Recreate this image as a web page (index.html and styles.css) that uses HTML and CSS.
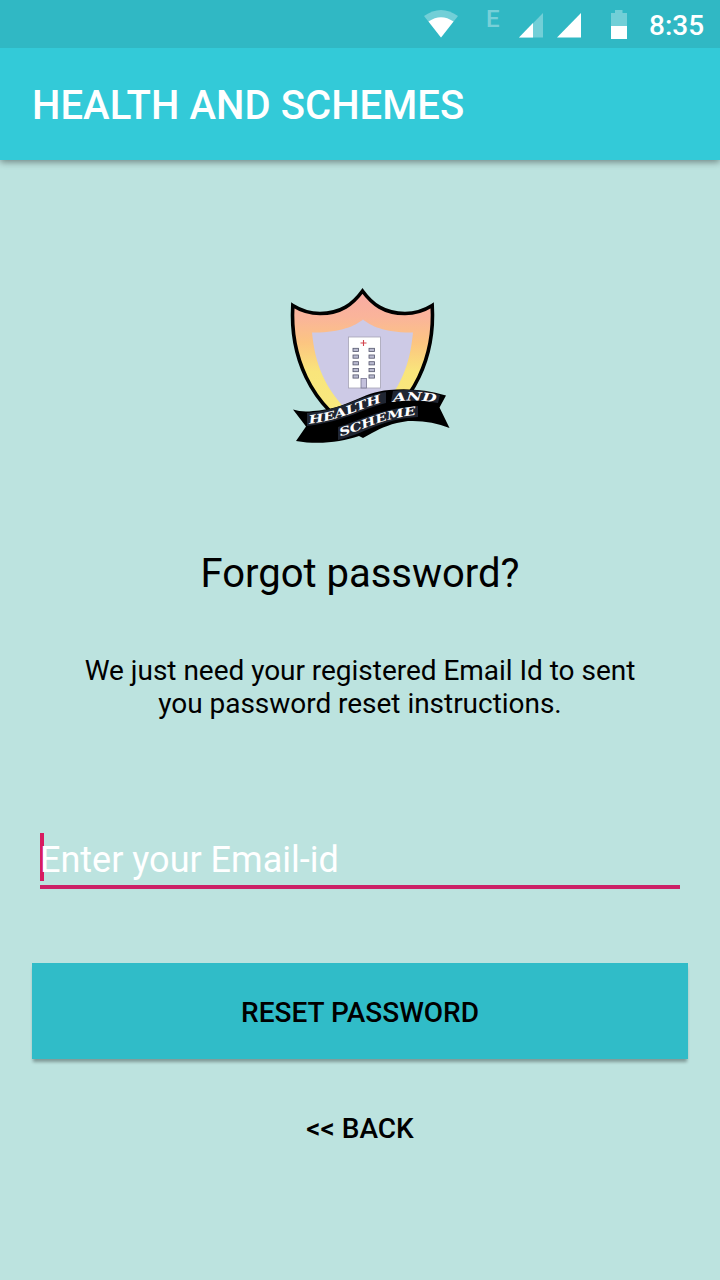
FILE: index.html
```html
<!DOCTYPE html>
<html lang="en">
<head>
<meta charset="utf-8">
<title>Health and Schemes</title>
<link rel="stylesheet" href="styles.css">
</head>
<body>
<div class="screen">
  <header class="status-bar">
    <svg class="wifi" width="36" height="30" viewBox="0 0 36 30">
      <path d="M0 6Q17-6 34 6L17 27.500Z" fill="#fff" opacity=".32"/>
      <path d="M4.500 11.500Q17 3 29.500 11.500L17 27.500Z" fill="#fff"/>
    </svg>
    <span class="network">E</span>
    <svg class="signal" width="25" height="25" viewBox="0 0 25 25">
      <path d="M24 0V24.500H0Z" fill="#fff" opacity=".32"/>
      <path d="M14 10V24.500H0Z" fill="#fff"/>
    </svg>
    <svg class="signal full" width="25" height="25" viewBox="0 0 25 25">
      <path d="M24 0V24.500H0Z" fill="#fff"/>
    </svg>
    <svg class="battery" width="18" height="30" viewBox="0 0 18 30">
      <path d="M5 0H12.500V3H17V16H1V3H5Z" fill="#fff" opacity=".32"/>
      <path d="M1 16H17V29H1Z" fill="#fff"/>
    </svg>
    <span class="clock">8:35</span>
  </header>
  <div class="app-bar"><h1 class="app-title">HEALTH AND SCHEMES</h1></div>
  <main class="content">
    <svg class="logo" width="180" height="175" viewBox="0 0 180 175" role="img" aria-label="Health and Scheme">
      <defs>
        <linearGradient id="shield" x1="0" y1="0" x2="0" y2="1">
          <stop offset="0" stop-color="#f8aaa4"/>
          <stop offset=".18" stop-color="#fab49a"/>
          <stop offset=".36" stop-color="#fcc581"/>
          <stop offset=".56" stop-color="#f9e57b"/>
          <stop offset="1" stop-color="#f7ec80"/>
        </linearGradient>
        <path id="line-one" d="M29 143.500C64 140 84 126 103 122.500"/>
        <path id="line-and" d="M113.500 122Q134 119 158 122.500"/>
        <path id="line-two" d="M60.500 156C82 151 101 138 139 134.500"/>
      </defs>
      <path d="M82.500 11C73 24 61 33.500 40 33.500C29 33.500 20 30 12.800 25.500C10 73 28 126 82.500 155C137 126 155 73 152.200 25.500C145 30 136 33.500 125 33.500C104 33.500 92 24 82.500 11Z" fill="url(#shield)" stroke="#000" stroke-width="3.600"/>
      <path d="M83 39.500C75 46 60 53 32 52.500C35 84 45 110 71 134H95C121 110 130 84 133 52.500C105 53 91 46 83 39.500Z" fill="#cdcae6"/>
      <rect x="68.500" y="57" width="32" height="51" fill="#fff" stroke="#a6a3b5" stroke-width=".8"/>
      <path d="M83.500 60V66M80.500 63H86.500" stroke="#d3444c" stroke-width="1.100"/>
      <g fill="#babbd0" stroke="#55566d" stroke-width=".8">
        <rect x="73" y="68.300" width="5.500" height="3.200"/><rect x="89" y="68.300" width="5.500" height="3.200"/>
        <rect x="73" y="75" width="5.500" height="3.200"/><rect x="89" y="75" width="5.500" height="3.200"/>
        <rect x="73" y="81.700" width="5.500" height="3.200"/><rect x="89" y="81.700" width="5.500" height="3.200"/>
        <rect x="73" y="88.500" width="5.500" height="3.200"/><rect x="89" y="88.500" width="5.500" height="3.200"/>
        <rect x="73" y="94.900" width="5.500" height="3.200"/><rect x="89" y="94.900" width="5.500" height="3.200"/>
      </g>
      <rect x="81" y="98.500" width="5.500" height="9.500" fill="#c3c0dc" stroke="#77748f" stroke-width=".8"/>
      <path d="M13 129.500Q22 132.500 33 131C68 129 82 112 109 110Q137 107 166 115.500L159.500 127.500L169.500 148Q150 140 128 141C112 143 101 148 92 153L83 158L79 156C61 162 39 165 16 161L26 146.500Z" fill="#000"/>
      <path d="M27 133C63 130 78 116 106 112L106 123C79 130 67 141 27 146Z" fill="#202632"/>
      <path d="M113 111Q136 108 160 115L158 123Q137 119 111 122Z" fill="#202632"/>
      <path d="M58 147C80 141 96 129 138 126V137C101 139 84 154 58 160Z" fill="#202632"/>
      <text class="ribbon-text"><textPath href="#line-one" textLength="76" lengthAdjust="spacingAndGlyphs">HEALTH</textPath></text>
      <text class="ribbon-text"><textPath href="#line-and" textLength="43" lengthAdjust="spacingAndGlyphs">AND</textPath></text>
      <text class="ribbon-text"><textPath href="#line-two" textLength="79" lengthAdjust="spacingAndGlyphs">SCHEME</textPath></text>
    </svg>
    <h2 class="heading">Forgot password?</h2>
    <p class="hint">We just need your registered Email Id to sent<br>you password reset instructions.</p>
    <div class="field"><span class="caret"></span><span class="placeholder">Enter your Email-id</span></div>
    <button class="reset" type="button">RESET PASSWORD</button>
    <button class="back" type="button">&lt;&lt; BACK</button>
  </main>
</div>
</body>
</html>
```
FILE: styles.css
```css
* { box-sizing: border-box; }
body { margin: 0; font-family: Roboto, sans-serif; color: #000; }
.screen { width: 720px; height: 1280px; background: #bce3df; overflow: hidden; display: flex; flex-direction: column; }
.status-bar { position: relative; z-index: 1; height: 48px; flex: none; background: #30b8c4; display: flex; align-items: flex-start; justify-content: flex-end; padding-right: 16px; color: #fff; }
.wifi { margin-top: 9.5px; margin-right: 26px; }
.network { width: 16px; margin: 8px 17px 0 0; font-size: 24px; line-height: 22px; font-weight: 500; opacity: .35; }
.signal { margin-top: 13px; margin-right: 13px; }
.signal.full { margin-right: 28px; }
.battery { margin-top: 10px; margin-right: 21px; }
.clock { font-size: 28px; line-height: 32px; margin-top: 10px; font-weight: 500; width: 55px; white-space: nowrap; }
.app-bar { height: 112px; flex: none; background: #33cad8; display: flex; align-items: center; padding: 4px 32px 0; box-shadow: 0 2px 7px rgba(0, 0, 0, .42); }
.app-title { margin: 0; color: #fff; font-size: 40px; line-height: 48px; font-weight: 500; letter-spacing: .07px; white-space: nowrap; }
.content { display: flex; flex-direction: column; align-items: stretch; padding: 120px 32px 0; }
.logo { display: block; margin-left: 248px; }
.ribbon-text { font-family: "DejaVu Serif", serif; font-size: 11.5px; font-weight: bold; font-style: italic; fill: #fff; }
.heading { margin: 95px 0 0; text-align: center; font-size: 40px; line-height: 48px; font-weight: 400; }
.hint { margin: 56px 0 0; text-align: center; font-size: 28px; line-height: 33px; letter-spacing: -.03px; }
.field { height: 56px; margin: 113px 8px 0; border-bottom: 4px solid #cc2167; display: flex; align-items: flex-start; }
.caret { width: 4px; height: 48px; background: #d81b60; margin-right: -4px; }
.placeholder { position: relative; color: #fff; font-size: 36px; line-height: 48px; padding-top: 3px; white-space: nowrap; }
.reset, .back { border: 0; padding: 4px 0 0; font: 500 28px/32px Roboto, sans-serif; color: #000; }
.reset { height: 96px; margin-top: 74px; background: #30bcc8; box-shadow: 0 4px 3px -1px rgba(0, 0, 0, .32); }
.back { height: 64px; margin-top: 36px; background: transparent; }
```
